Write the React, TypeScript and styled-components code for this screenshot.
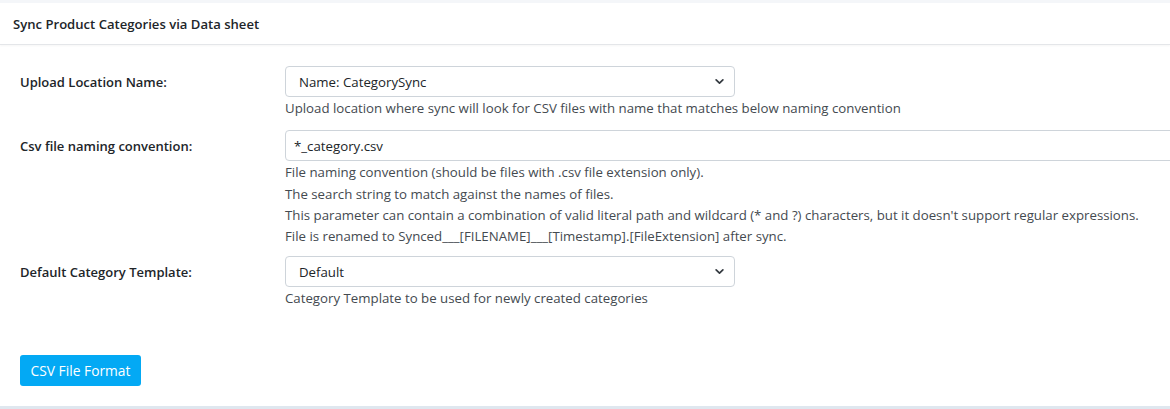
import React from "react";
import styled, { createGlobalStyle } from "styled-components";

const Global = createGlobalStyle`
  html, body { margin: 0; padding: 0; background: #f4f6f9; }
  body { font-family: "Open Sans", "Noto Sans", sans-serif; font-size: 13.25px; color: #212529; overflow: hidden; }
  * { box-sizing: border-box; }
`;

const Page = styled.div`
  width: 1170px;
  height: 409px;
  padding-top: 3px;
  overflow: hidden;
`;

const Card = styled.section`
  background: #fff;
  border-bottom: 3px solid #dfe7ef;
  height: 406px;
  display: flex;
  flex-direction: column;
`;

const Header = styled.header`
  height: 42px;
  display: flex;
  align-items: center;
  padding: 0 13px;
  border-bottom: 1px solid #e4e6e9;
  box-shadow: 0 1px 2px rgba(0, 0, 0, 0.04);
  font-weight: 600;
  font-size: 13.1px;
  color: #212529;
`;

const Body = styled.div`
  flex: 1;
  padding: 21px 0 0 20px;
  display: flex;
  flex-direction: column;
`;

const Row = styled.div<{ $gap: number }>`
  display: grid;
  grid-template-columns: 265px 1fr;
  margin-bottom: ${(p) => p.$gap}px;
`;

const Label = styled.label`
  font-weight: 600;
  font-size: 13px;
  height: 31px;
  display: flex;
  align-items: center;
  color: #212529;
`;

const Field = styled.div`
  display: flex;
  flex-direction: column;
  min-width: 0;
`;

const SelectBox = styled.div`
  width: 450px;
  height: 31px;
  border: 1px solid #ced4da;
  border-radius: 4px;
  display: flex;
  align-items: center;
  justify-content: space-between;
  padding: 0 10px 0 13px;
  color: #212529;
  background: #fff;
`;

const TextBox = styled.div`
  width: 900px;
  height: 31px;
  border: 1px solid #ced4da;
  border-radius: 4px;
  display: flex;
  align-items: center;
  padding: 0 8px;
  background: #fff;
`;

const Help = styled.div`
  color: #444a50;
  line-height: 21.3px;
  margin-top: 1px;
`;

const Button = styled.button`
  align-self: flex-start;
  margin-top: 45px;
  height: 31px;
  width: 121px;
  border: none;
  border-radius: 3px;
  background: #03a9f4;
  color: #fff;
  font-family: inherit;
  font-size: 13.8px;
  padding: 0;
`;

const Chevron = () => (
  <svg width="9" height="9" viewBox="0 0 16 16">
    <path d="M2 5l6 6 6-6" fill="none" stroke="#343a40" strokeWidth="3" strokeLinecap="round" strokeLinejoin="round" />
  </svg>
);

export default function App() {
  return (
    <Page>
      <Global />
      <Card>
        <Header>Sync Product Categories via Data sheet</Header>
        <Body>
          <Row $gap={11}>
            <Label>Upload Location Name:</Label>
            <Field>
              <SelectBox>
                <span>Name: CategorySync</span>
                <Chevron />
              </SelectBox>
              <Help>Upload location where sync will look for CSV files with name that matches below naming convention</Help>
            </Field>
          </Row>
          <Row $gap={9}>
            <Label>Csv file naming convention:</Label>
            <Field>
              <TextBox>*_category.csv</TextBox>
              <Help>
                File naming convention (should be files with .csv file extension only).
                <br />
                The search string to match against the names of files.
                <br />
                This parameter can contain a combination of valid literal path and wildcard (* and ?) characters, but it doesn't support regular expressions.
                <br />
                File is renamed to Synced___[FILENAME]___[Timestamp].[FileExtension] after sync.
              </Help>
            </Field>
          </Row>
          <Row $gap={0}>
            <Label>Default Category Template:</Label>
            <Field>
              <SelectBox>
                <span>Default</span>
                <Chevron />
              </SelectBox>
              <Help>Category Template to be used for newly created categories</Help>
            </Field>
          </Row>
          <Button>CSV File Format</Button>
        </Body>
      </Card>
    </Page>
  );
}
